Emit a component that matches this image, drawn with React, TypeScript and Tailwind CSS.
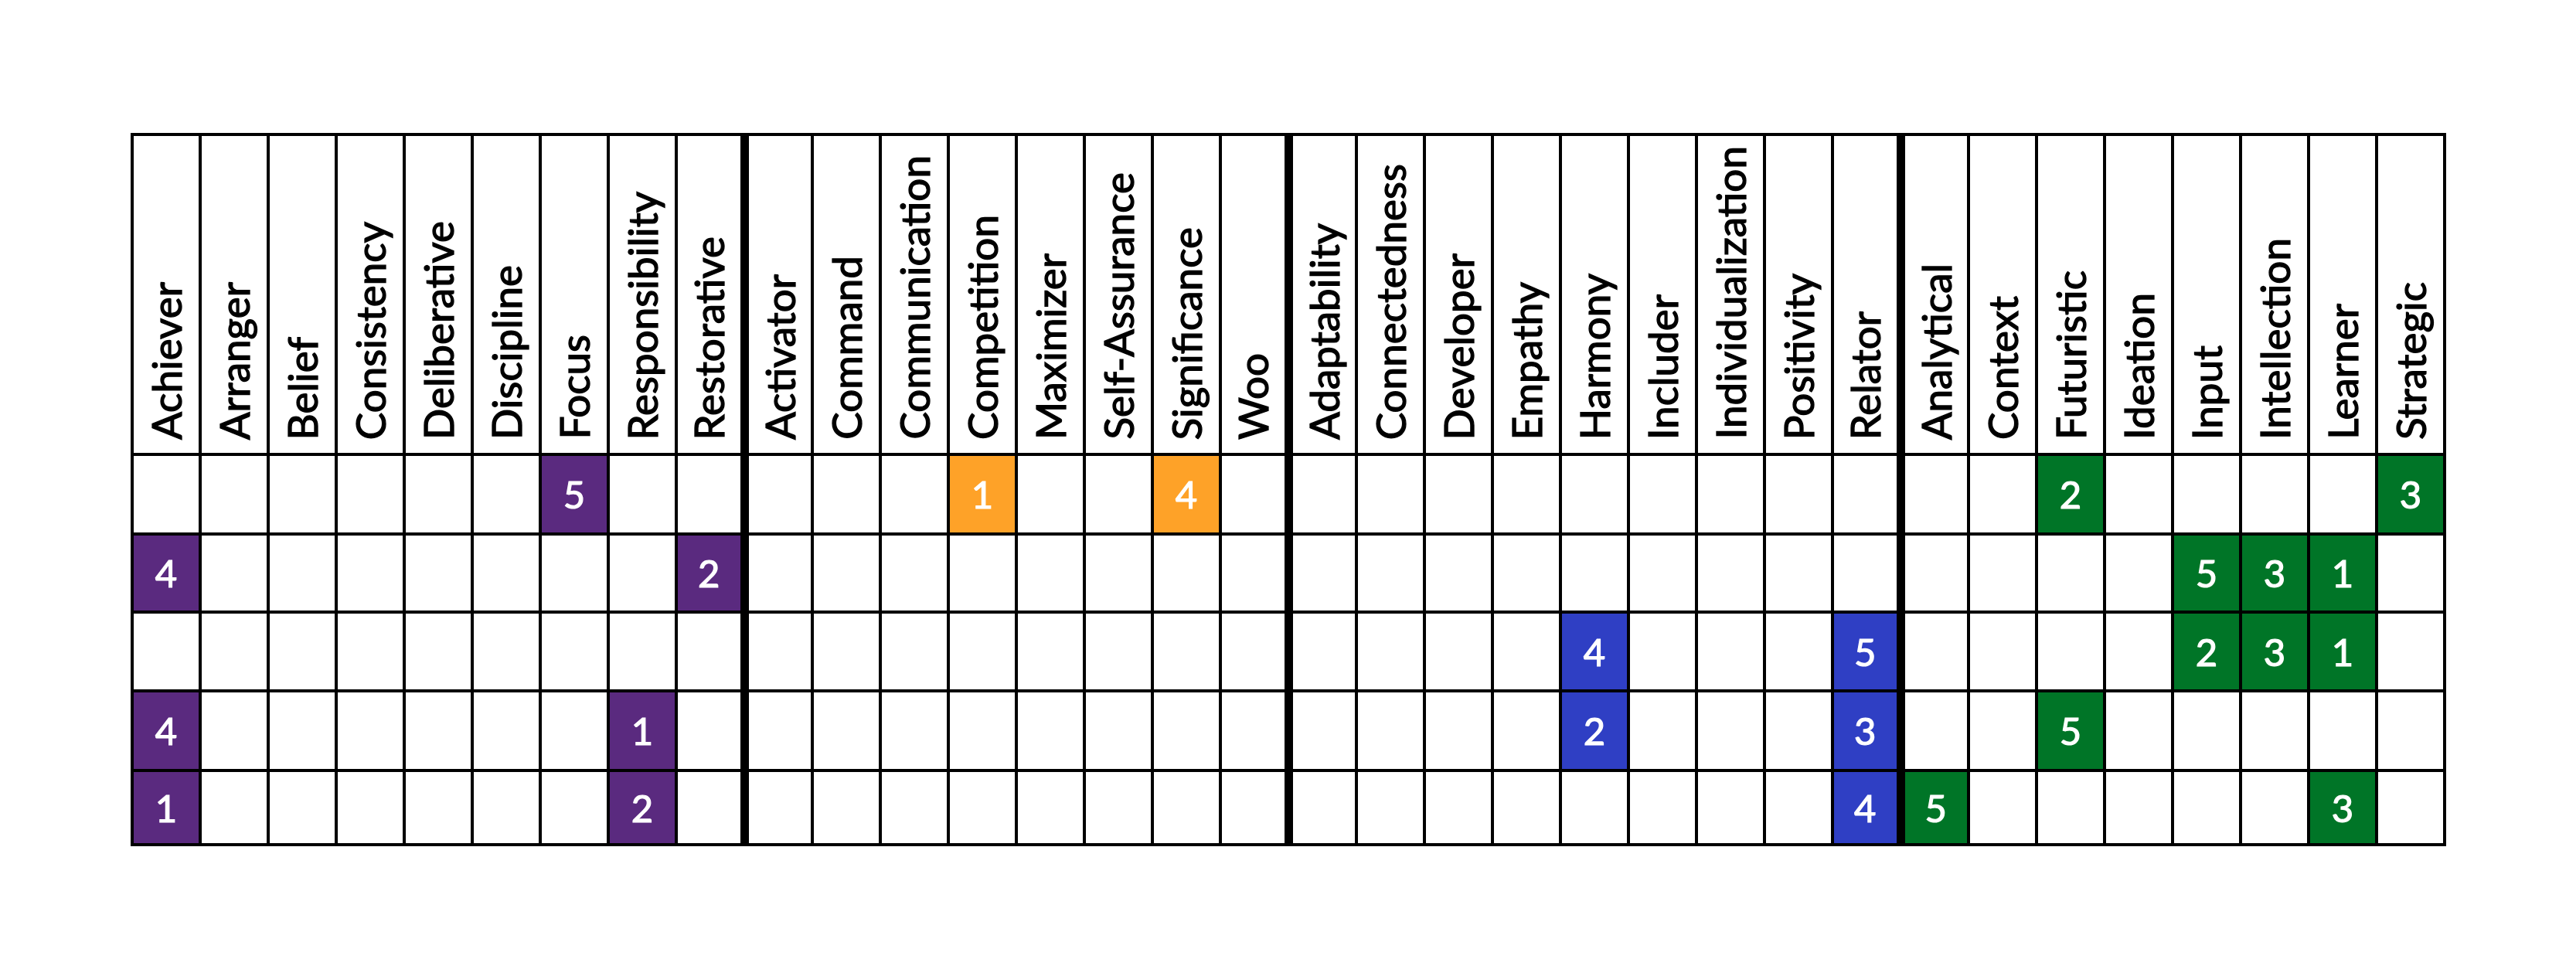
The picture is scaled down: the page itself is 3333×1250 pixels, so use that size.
import React from 'react';

// strength groups, left to right
const groups = [
  {
    fill: 'bg-[#5a2a7f]',
    names: ['Achiever', 'Arranger', 'Belief', 'Consistency', 'Deliberative', 'Discipline', 'Focus', 'Responsibility', 'Restorative'],
  },
  {
    fill: 'bg-[#fea228]',
    names: ['Activator', 'Command', 'Communication', 'Competition', 'Maximizer', 'Self-Assurance', 'Significance', 'Woo'],
  },
  {
    fill: 'bg-[#2f3fc4]',
    names: ['Adaptability', 'Connectedness', 'Developer', 'Empathy', 'Harmony', 'Includer', 'Individualization', 'Positivity', 'Relator'],
  },
  {
    fill: 'bg-[#007527]',
    names: ['Analytical', 'Context', 'Futuristic', 'Ideation', 'Input', 'Intellection', 'Learner', 'Strategic'],
  },
];

const columns = groups.flatMap((g, gi) =>
  g.names.map((name, i) => ({ name, fill: g.fill, groupStart: gi > 0 && i === 0 }))
);

const rows: { h: string; values: Record<string, number> }[] = [
  { h: 'h-[103px]', values: { Focus: 5, Competition: 1, Significance: 4, Futuristic: 2, Strategic: 3 } },
  { h: 'h-[101px]', values: { Achiever: 4, Restorative: 2, Input: 5, Intellection: 3, Learner: 1 } },
  { h: 'h-[102px]', values: { Harmony: 4, Relator: 5, Input: 2, Intellection: 3, Learner: 1 } },
  { h: 'h-[103px]', values: { Achiever: 4, Responsibility: 1, Harmony: 2, Relator: 3, Futuristic: 5 } },
  { h: 'h-[96px]', values: { Achiever: 1, Responsibility: 2, Relator: 4, Analytical: 5, Learner: 3 } },
];

const App: React.FC = () => {
  return (
    <div className="w-[3333px] h-[1250px] bg-white pt-[172px] pl-[169px] font-['Lato','Liberation_Sans',sans-serif]">
      <table className="table-fixed border-collapse w-[2996px] border-4 border-black">
        <thead>
          <tr>
            {columns.map(col => (
              <th
                key={col.name}
                className={`p-0 border-4 border-black align-bottom ${col.groupStart ? 'border-l-[11px]' : ''}`}
              >
                <div className="h-[410px] flex items-end justify-center pb-[17px]">
                  <div className="[writing-mode:vertical-rl] rotate-180 whitespace-nowrap text-[53px] leading-[64px] font-normal text-black [-webkit-text-stroke:1.3px_black]">
                    {col.name}
                  </div>
                </div>
              </th>
            ))}
          </tr>
        </thead>
        <tbody>
          {rows.map((row, ri) => (
            <tr key={ri}>
              {columns.map(col => {
                const v = row.values[col.name];
                return (
                  <td
                    key={col.name}
                    className={`p-0 ${row.h} border-4 border-black text-center align-middle text-[49px] leading-none font-normal text-white [-webkit-text-stroke:1.2px_white] ${col.groupStart ? 'border-l-[11px]' : ''} ${v ? col.fill : 'bg-white'}`}
                  >
                    {v ?? ''}
                  </td>
                );
              })}
            </tr>
          ))}
        </tbody>
      </table>
    </div>
  );
};

export default App;
